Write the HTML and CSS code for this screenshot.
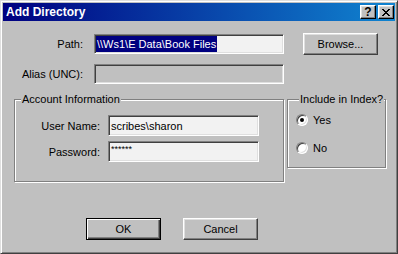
FILE: index.html
```html
<!DOCTYPE html>
<html lang="en">

<head>
  <meta charset="UTF-8" />
  <meta name="viewport" content="width=device-width, initial-scale=1.0" />
  <title>Add Directory</title>
  <link rel="stylesheet" href="styles.css">
</head>

<body>

  <div class="window">
    <div class="titlebar">
      <span class="title">Add Directory</span>
      <div class="tb-buttons">
        <span class="tb-btn tb-help">?</span>
        <span class="tb-btn">
          <svg viewBox="0 0 8 7" width="8" height="7" shape-rendering="crispEdges">
            <path d="M0 0h2v1h-2zM6 0h2v1h-2zM1 1h2v1h-2zM5 1h2v1h-2zM2 2h4v1h-4zM3 3h2v1h-2zM2 4h4v1h-4zM1 5h2v1h-2zM5 5h2v1h-2zM0 6h2v1h-2zM6 6h2v1h-2z" fill="#000" />
          </svg>
        </span>
      </div>
    </div>

    <div class="content">
      <div class="row row-path">
        <label class="lbl">Path:</label>
        <div class="field field-wide"><span class="sel">\\Ws1\E Data\Book Files</span></div>
        <button class="btn browse">Browse...</button>
      </div>

      <div class="row row-alias">
        <label class="lbl">Alias (UNC):</label>
        <div class="field field-wide disabled"></div>
      </div>

      <div class="groups">
        <fieldset class="group account">
          <legend>Account Information</legend>
          <div class="row acc-row">
            <label class="lbl lbl-acc">User Name:</label>
            <div class="field field-acc">scribes\sharon</div>
          </div>
          <div class="row acc-row acc-pass">
            <label class="lbl lbl-acc">Password:</label>
            <div class="field field-acc pass">******</div>
          </div>
        </fieldset>

        <fieldset class="group index">
          <legend>Include in Index?</legend>
          <div class="radio-row"><span class="radio checked"></span>Yes</div>
          <div class="radio-row radio-no"><span class="radio"></span>No</div>
        </fieldset>
      </div>

      <div class="actions">
        <button class="btn default">OK</button>
        <button class="btn cancel">Cancel</button>
      </div>
    </div>
  </div>

</body>

</html>
```

FILE: styles.css
```css
body {
  margin: 0;
  padding: 0;
  background: #c0c0c0;
  font-family: "Liberation Sans", Arial, sans-serif;
  font-size: 11px;
  color: #000;
}

.window {
  box-sizing: border-box;
  width: 398px;
  height: 254px;
  padding: 2px;
  background: #c0c0c0;
  border: 1px solid;
  border-color: #dfdfdf #404040 #404040 #dfdfdf;
  box-shadow: inset 1px 1px #fff, inset -1px -1px #808080;
}

.titlebar {
  height: 18px;
  display: flex;
  align-items: center;
  justify-content: space-between;
  background: linear-gradient(to right, #000080, #1084d0);
}

.title {
  color: #fff;
  font-weight: bold;
  font-size: 12px;
  padding-left: 3px;
}

.tb-buttons {
  display: flex;
  gap: 2px;
  padding-right: 1px;
}

.tb-btn {
  box-sizing: border-box;
  width: 16px;
  height: 14px;
  display: flex;
  align-items: center;
  justify-content: center;
  background: #c0c0c0;
  border: 1px solid;
  border-color: #fff #000 #000 #fff;
  box-shadow: inset -1px -1px #808080, inset 1px 1px #dfdfdf;
}

.tb-help {
  font-weight: bold;
  font-size: 12px;
  line-height: 12px;
}

.content {
  padding-top: 12px;
}

.row {
  display: flex;
  align-items: center;
  height: 22px;
}

.row-alias {
  margin-top: 8px;
}

.lbl {
  width: 80px;
  margin-right: 11px;
  text-align: right;
}

.field {
  box-sizing: border-box;
  height: 20px;
  display: flex;
  align-items: center;
  padding: 0 2px;
  background: #f2f2f2;
  border: 1px solid;
  border-color: #808080 #fff #fff #808080;
  box-shadow: inset 1px 1px #404040, inset -1px -1px #dfdfdf;
  white-space: nowrap;
}

.field-wide {
  width: 190px;
  padding: 0 1px;
}

.field.disabled {
  background: #c0c0c0;
}

.sel {
  background: #000080;
  color: #fff;
  padding: 1px 1px;
  line-height: 14px;
}

.btn {
  box-sizing: border-box;
  height: 22px;
  width: 75px;
  padding: 0;
  font-family: inherit;
  font-size: 11px;
  color: #000;
  background: #c0c0c0;
  border: 1px solid;
  border-color: #fff #404040 #404040 #fff;
  box-shadow: inset -1px -1px #808080, inset 1px 1px #dfdfdf;
}

.browse {
  margin-left: 19px;
}

.groups {
  display: flex;
  align-items: flex-start;
  margin-top: 8px;
}

.group {
  margin: 0;
  padding: 0;
  border: 1px solid #808080;
  box-shadow: inset 1px 1px #fff, 1px 1px #fff;
}

.group legend {
  padding: 0 1px;
  margin-left: 6px;
  background: #c0c0c0;
  white-space: nowrap;
}

.account {
  width: 270px;
  box-sizing: border-box;
  margin-left: 11px;
  padding-bottom: 19px;
}

.acc-row {
  margin-top: 10px;
  height: 21px;
}

.acc-pass {
  margin-top: 5px;
}

.lbl-acc {
  width: 85px;
  margin-right: 8px;
}

.field-acc {
  width: 151px;
  height: 21px;
}

.pass {
  align-items: flex-start;
  padding-top: 2px;
  font-size: 9px;
}

.index {
  width: 99px;
  box-sizing: border-box;
  margin-left: 3px;
  padding: 8px 0 12px 8px;
}

.index legend {
  margin-left: 3px;
}

.radio-row {
  display: flex;
  align-items: center;
  gap: 5px;
  height: 14px;
}

.radio-no {
  margin-top: 14px;
}

.radio {
  box-sizing: border-box;
  width: 12px;
  height: 12px;
  border-radius: 50%;
  display: flex;
  align-items: center;
  justify-content: center;
  background: #fff;
  border: 1px solid;
  border-color: #808080 #fff #fff #808080;
  box-shadow: inset 1px 1px #404040, inset -1px -1px #dfdfdf;
}

.radio.checked::after {
  content: "";
  width: 4px;
  height: 4px;
  border-radius: 50%;
  background: #000;
}

.actions {
  display: flex;
  gap: 22px;
  margin-top: 36px;
  padding-left: 83px;
}

.btn.default {
  border-color: #000;
  box-shadow: inset 1px 1px #fff, inset -1px -1px #404040, inset -2px -2px #808080;
}
```
